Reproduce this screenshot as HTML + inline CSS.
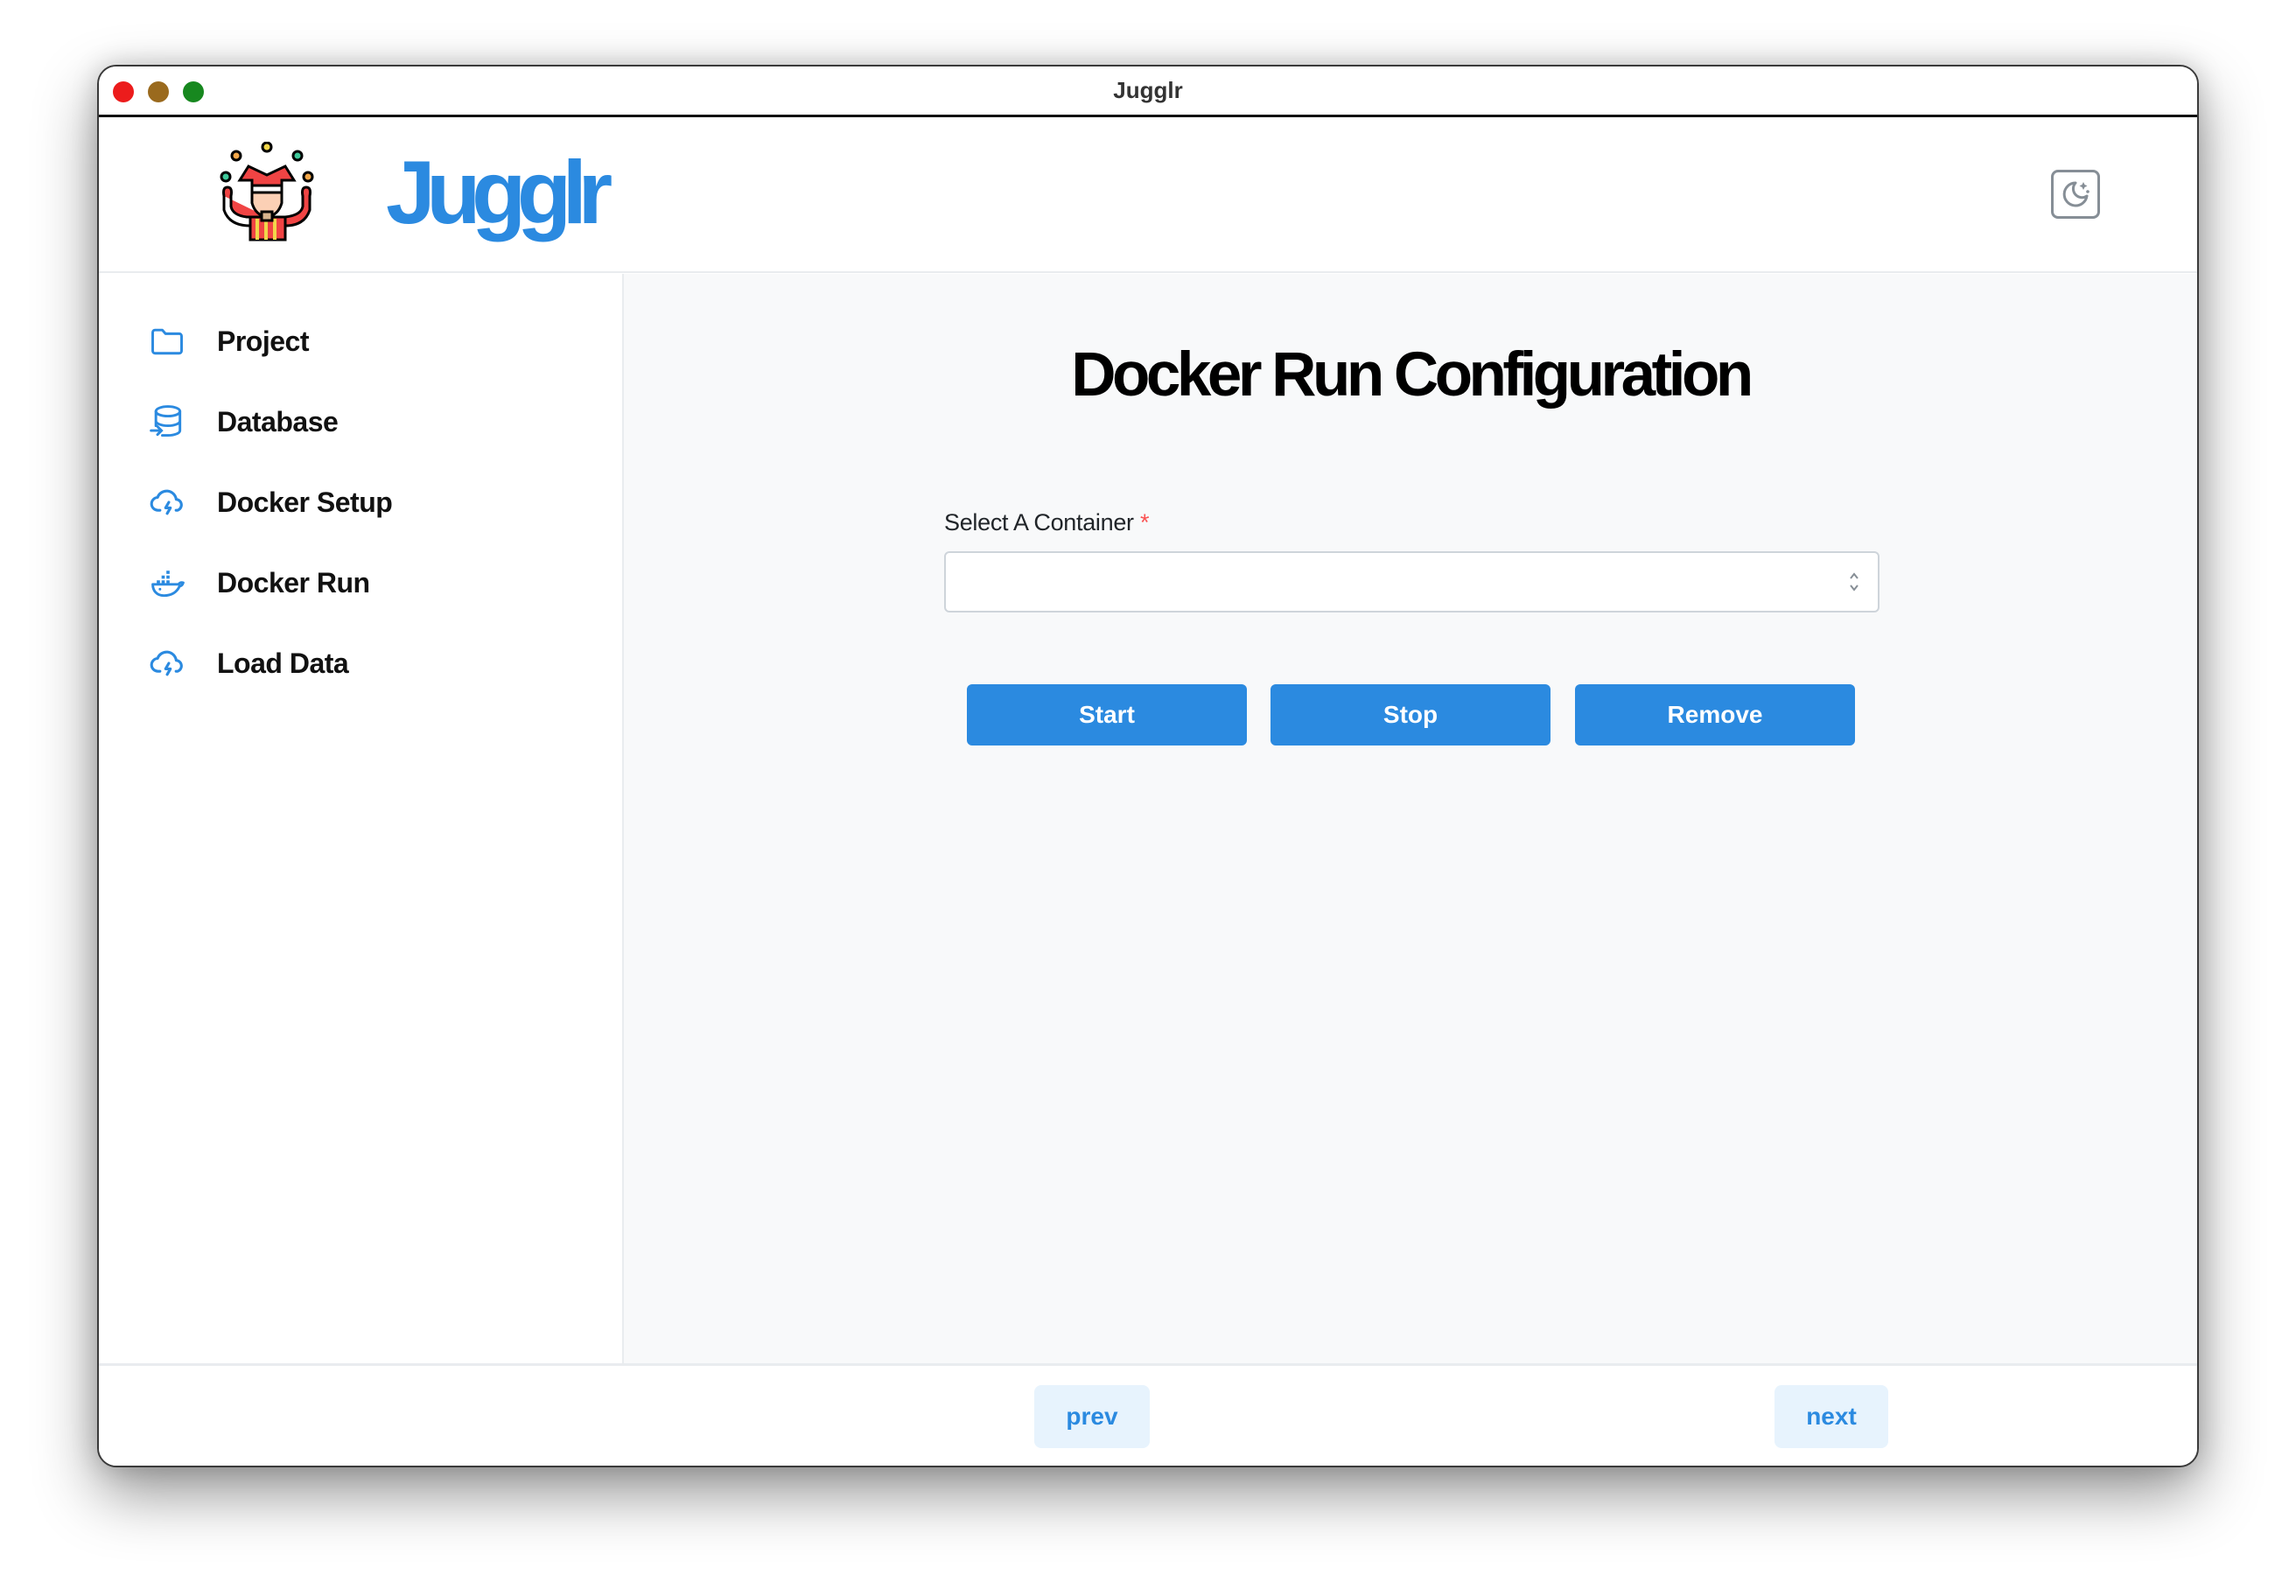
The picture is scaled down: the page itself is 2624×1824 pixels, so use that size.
<!DOCTYPE html>
<html><head><meta charset="utf-8"><style>
*{box-sizing:border-box;margin:0;padding:0}
body{width:2624px;height:1824px;background:#fff;font-family:"Liberation Sans",sans-serif;position:relative;overflow:hidden}
.win{position:absolute;left:111px;top:74px;width:2402px;height:1603px;border:2px solid #3a3a3a;border-radius:22px;background:#fff;overflow:hidden;box-shadow:0 30px 70px rgba(0,0,0,0.42),0 0 30px rgba(0,0,0,0.18)}
.tb{position:absolute;left:0;top:0;right:0;height:58px;border-bottom:3px solid #111;background:#fff}
.dot{position:absolute;top:17px;width:24px;height:24px;border-radius:50%}
.tt{position:absolute;left:0;right:0;top:14px;text-align:center;font-size:26px;font-weight:bold;color:#333}
.hdr{position:absolute;left:0;right:0;top:58px;height:178px;border-bottom:2px solid #e9ecef;background:#fff}
.side{position:absolute;left:0;top:237px;width:600px;height:1245px;border-right:2px solid #e9ecef;background:#fff}
.main{position:absolute;left:600px;top:237px;right:0;height:1245px;background:#f8f9fa}
.foot{position:absolute;left:0;right:0;top:1482px;bottom:0;border-top:3px solid #e9ecef;background:#fff}
.item{position:absolute;left:56px;height:50px;display:flex;align-items:center}
.item span{position:absolute;left:79px;font-size:32px;font-weight:bold;letter-spacing:-0.5px;color:#111;white-space:nowrap}
.btn{position:absolute;top:469px;width:320px;height:70px;background:#2b8ae0;border-radius:6px;color:#fff;font-size:28px;font-weight:bold;display:flex;align-items:center;justify-content:center}
.nb{position:absolute;top:22px;height:72px;background:#e7f3fd;border-radius:8px;color:#2b8ae0;font-size:28px;font-weight:bold;display:flex;align-items:center;justify-content:center}
</style></head><body>
<div class="win">
 <div class="tb">
  <div class="dot" style="left:16px;background:#ec1c1c"></div>
  <div class="dot" style="left:56px;background:#9a6a1e"></div>
  <div class="dot" style="left:96px;background:#17881f"></div>
  <div class="tt" style="top:12px">Jugglr</div>
 </div>
 <div class="hdr">
  <svg style="position:absolute;left:135px;top:28px" width="114" height="116" viewBox="0 0 114 116">
   <g stroke="#000" stroke-width="3">
    <circle cx="22" cy="16" r="5" fill="#f5a84a"/>
    <circle cx="57" cy="6" r="5" fill="#f1d64a"/>
    <circle cx="92" cy="16" r="5" fill="#3ec99a"/>
    <circle cx="10" cy="40" r="5" fill="#3ec99a"/>
    <circle cx="104" cy="40" r="5" fill="#f5a84a"/>
    <path d="M8 62 Q6 52 12 52 Q18 52 16 62 L16 74 Q18 84 34 86 L38 86 L38 112 L78 112 L78 86 Q96 84 98 74 L98 62 Q96 52 102 52 Q108 52 106 62 L106 78 Q100 96 78 96" fill="#f04444"/>
    <path d="M8 62 L8 78 Q14 96 38 96" fill="none"/>
    <rect x="38" y="86" width="40" height="26" fill="#f04444"/>
    <path d="M46 88 V112 M56 88 V112 M66 88 V112" stroke="#f1d64a" stroke-width="4"/>
    <path d="M40 54 L40 70 Q44 84 57 86 Q70 84 74 70 L74 54 Z" fill="#fbd0b5"/>
    <rect x="40" y="50" width="34" height="8" fill="#fff"/>
    <path d="M26 44 L36 28 L57 38 L78 28 L88 44 L74 44 L74 50 L40 50 L40 44 Z" fill="#f04444"/>
    <rect x="51" y="80" width="12" height="10" fill="#d8b48e"/>
   </g>
  </svg>
  <div style="position:absolute;left:328px;top:28px;font-size:102px;font-weight:bold;letter-spacing:-10.5px;color:#2b8ae0">Jugglr</div>
  <div style="position:absolute;left:2231px;top:60px;width:56px;height:56px;border:3px solid #868e96;border-radius:8px"></div>
  <svg style="position:absolute;left:2231px;top:60px" width="56" height="56" viewBox="0 0 56 56"><path d="M28 15 A13 13 0 1 0 41 30 A10 10 0 0 1 28 15 Z" fill="none" stroke="#868e96" stroke-width="3" stroke-linejoin="round"/><path d="M37 14 l1.5 3 3 1.5 -3 1.5 -1.5 3 -1.5 -3 -3 -1.5 3 -1.5z" fill="#868e96"/><circle cx="42" cy="25" r="1.8" fill="#868e96"/></svg>
 </div>
 <div class="side">
  <div class="item" style="top:52px"><svg width="44" height="44" viewBox="0 0 24 24" fill="none" stroke="#2b8ae0" stroke-width="1.6" stroke-linejoin="round"><path d="M3 6.5a1.5 1.5 0 0 1 1.5-1.5H9l2 2.3h8.5A1.5 1.5 0 0 1 21 8.8V18a1.5 1.5 0 0 1-1.5 1.5h-15A1.5 1.5 0 0 1 3 18z"/></svg><span>Project</span></div>
  <div class="item" style="top:144px"><svg width="44" height="44" viewBox="0 0 24 24" fill="none" stroke="#2b8ae0" stroke-width="1.6" stroke-linecap="round"><ellipse cx="12.5" cy="5.5" rx="7.5" ry="3"/><path d="M5 5.5v6c0 1.6 3.4 3 7.5 3s7.5-1.4 7.5-3v-6M20 11.5v6c0 1.6-3.4 3-7.5 3H9M5 11.5v3"/><path d="M2 17.5h6M6 15l2.5 2.5L6 20"/></svg><span>Database</span></div>
  <div class="item" style="top:236px"><svg width="46" height="44" viewBox="0 0 24 24" fill="none" stroke="#2b8ae0" stroke-width="1.7" stroke-linecap="round" stroke-linejoin="round"><path d="M7 17H6a4 4 0 0 1-.5-8 6 6 0 0 1 11.6 1.2A3.5 3.5 0 0 1 18 17h-1"/><path d="M12.5 12l-2 3.5h3l-2 3.5"/></svg><span>Docker Setup</span></div>
  <div class="item" style="top:328px"><svg width="46" height="44" viewBox="0 0 24 24" fill="none" stroke="#2b8ae0" stroke-width="1.6" stroke-linejoin="round"><path d="M2.5 13h16c.8-1 2-1.3 3-1-.4 1.3-1.2 2-2.3 2.2C17.5 18 14 20 9.5 20 5 20 2.5 17 2.5 13z"/><path d="M5 10.5h2v2H5zM8 10.5h2v2H8zM11 10.5h2v2h-2zM8 7.5h2v2H8zM11 7.5h2v2h-2zM11 4.5h2v2h-2z" fill="#2b8ae0" stroke="none"/><circle cx="7" cy="16" r=".8" fill="#2b8ae0" stroke="none"/></svg><span>Docker Run</span></div>
  <div class="item" style="top:420px"><svg width="46" height="44" viewBox="0 0 24 24" fill="none" stroke="#2b8ae0" stroke-width="1.7" stroke-linecap="round" stroke-linejoin="round"><path d="M7 17H6a4 4 0 0 1-.5-8 6 6 0 0 1 11.6 1.2A3.5 3.5 0 0 1 18 17h-1"/><path d="M12.5 12l-2 3.5h3l-2 3.5"/></svg><span>Load Data</span></div>
 </div>
 <div class="main">
  <div style="position:absolute;left:0;right:0;top:75px;text-align:center;font-size:71px;font-weight:bold;letter-spacing:-4.5px;color:#000">Docker Run Configuration</div>
  <div style="position:absolute;left:366px;top:269px;font-size:27px;color:#212529;letter-spacing:-0.3px">Select A Container <span style="color:#fa5252">*</span></div>
  <div style="position:absolute;left:366px;top:317px;width:1069px;height:70px;background:#fff;border:2px solid #ced4da;border-radius:6px"></div>
  <svg style="position:absolute;left:1398px;top:338px" width="16" height="28" viewBox="0 0 16 28" fill="none" stroke="#868e96" stroke-width="2"><path d="M4 10l4-5 4 5M4 18l4 5 4-5"/></svg>
  <div class="btn" style="left:392px">Start</div>
  <div class="btn" style="left:739px">Stop</div>
  <div class="btn" style="left:1087px">Remove</div>
 </div>
 <div class="foot">
  <div class="nb" style="left:1069px;width:132px">prev</div>
  <div class="nb" style="left:1915px;width:130px">next</div>
 </div>
</div>
</body></html>
